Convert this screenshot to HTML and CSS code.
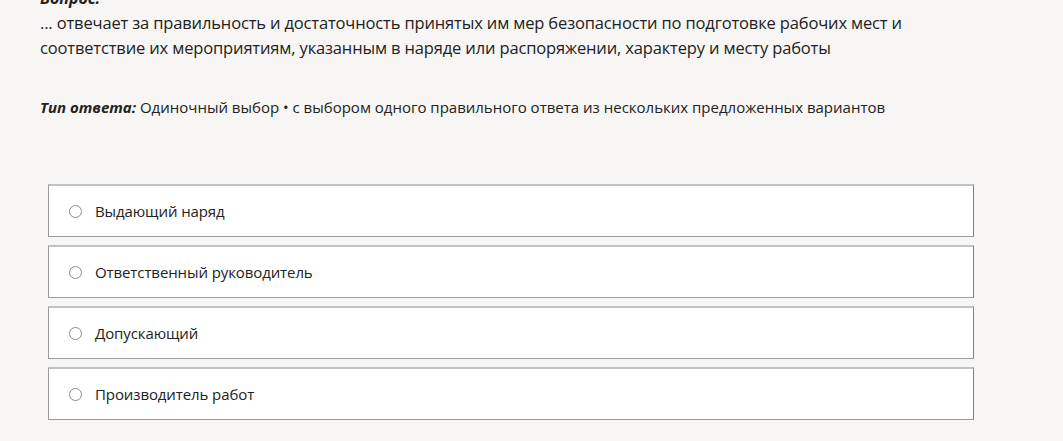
FILE: index.html
```html
<!DOCTYPE html>
<html lang="ru">
<head>
<meta charset="utf-8">
<link rel="stylesheet" href="styles.css">
</head>
<body>
<div class="page">
  <div class="q-label">Вопрос:</div>
  <div class="q-text">... отвечает за правильность и достаточность принятых им мер безопасности по подготовке рабочих мест и соответствие их мероприятиям, указанным в наряде или распоряжении, характеру и месту работы</div>
  <div class="q-type"><span class="type-label">Тип ответа:</span> Одиночный выбор • с выбором одного правильного ответа из нескольких предложенных вариантов</div>
  <div class="options">
    <label class="option"><span class="radio"></span><span>Выдающий наряд</span></label>
    <label class="option"><span class="radio"></span><span>Ответственный руководитель</span></label>
    <label class="option"><span class="radio"></span><span>Допускающий</span></label>
    <label class="option"><span class="radio"></span><span>Производитель работ</span></label>
  </div>
</div>
</body>
</html>
```

FILE: styles.css
```css
html, body {
  margin: 0;
  padding: 0;
  background: #f7f6f4;
}
body {
  font-family: "Open Sans", "Noto Sans", sans-serif;
  color: #222;
}
.page {
  padding: 0 0 0 40px;
  width: 940px;
  margin-top: -10px;
}
.q-label {
  font-weight: bold;
  font-style: italic;
  font-size: 16px;
  line-height: 16px;
  height: 20px;
}
.q-text {
  font-size: 16.5px;
  line-height: 25px;
  width: 880px;
  letter-spacing: -0.15px;
}
.q-type {
  margin-top: 37px;
  font-size: 15px;
  line-height: 20px;
  letter-spacing: 0;
}
.type-label {
  font-weight: bold;
  font-style: italic;
}
.options {
  margin-top: 67px;
  margin-left: 8px;
  width: 926px;
  display: flex;
  flex-direction: column;
  gap: 8px;
}
.option {
  box-sizing: border-box;
  height: 53px;
  background: #fff;
  border: 1px solid #9c9c9c;
  border-top: 2px solid #c2c2c2;
  border-right-color: #7e7e7e;
  display: flex;
  align-items: center;
  padding-left: 20px;
  font-size: 15px;
  letter-spacing: -0.1px;
  gap: 13px;
}
.radio {
  border: 1px solid #8a8a8a;
  border-radius: 50%;
  box-sizing: border-box;
  flex: none;
  width: 13px;
  height: 13px;
}
```
